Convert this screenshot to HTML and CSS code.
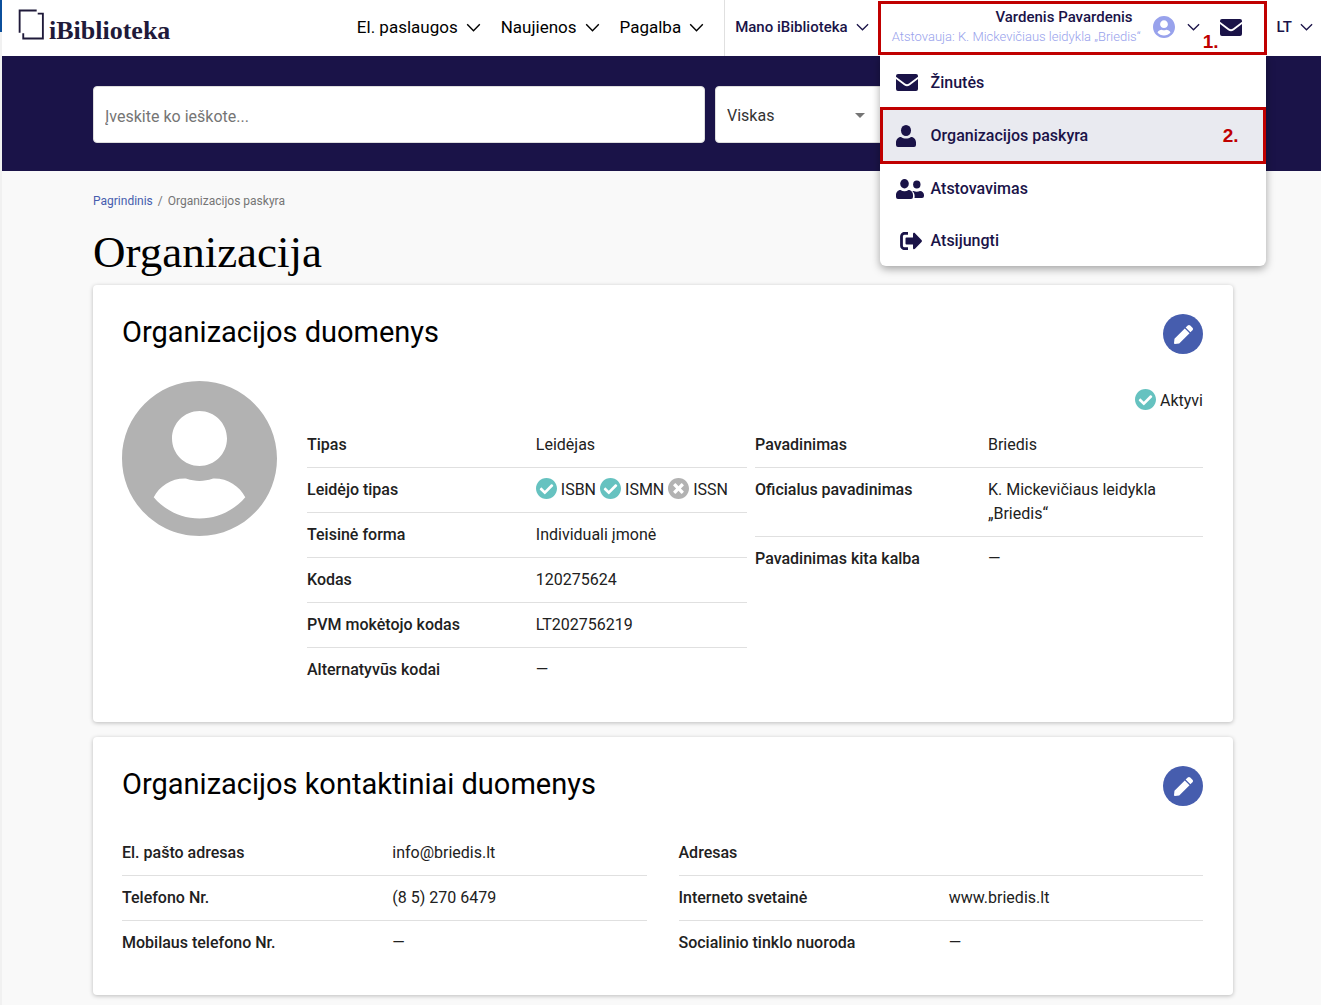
FILE: index.html
```html
<!DOCTYPE html>
<html lang="lt">
<head>
<meta charset="utf-8">
<meta name="viewport" content="width=device-width, initial-scale=1">
<title>Organizacija</title>
<link rel="stylesheet" href="styles.css">
</head>
<body>
<svg class="sprite" aria-hidden="true">
  <symbol id="chevron" viewBox="0 0 16 10"><path d="M1 1.5 8 8.5 15 1.5" fill="none" stroke="currentColor" stroke-width="1.6"/></symbol>
  <symbol id="envelope" viewBox="0 0 22 17"><path d="M2 0h18a2 2 0 0 1 2 2v.8l-9 6.7c-1.4 1-2.6 1-4 0L0 2.8V2a2 2 0 0 1 2-2z"/><path d="M0 5l8.2 6.2c1.9 1.4 3.700 1.400 5.600 0L22 5v10a2 2 0 0 1-2 2H2a2 2 0 0 1-2-2z"/></symbol>
  <symbol id="user" viewBox="0 0 20 22"><ellipse cx="10" cy="5.500" rx="5" ry="5.500"/><path d="M5 12c3 2 7 2 10 0 3 0 5 2.500 5 5.500V20a2 2 0 0 1-2 2H2a2 2 0 0 1-2-2v-2.500C0 14.500 2 12 5 12z"/></symbol>
  <symbol id="users" viewBox="0 0 28 20"><ellipse cx="8.500" cy="4.700" rx="4.300" ry="4.700"/><path d="M4.500 11c2.400 1.600 5.600 1.600 8 0 2.500 0 4.500 2.300 4.500 5v2a2 2 0 0 1-2 2H2a2 2 0 0 1-2-2v-2c0-2.700 2-5 4.500-5z"/><ellipse cx="20.800" cy="5.500" rx="3.700" ry="4"/><path d="M17.500 12c2 1 4.500 1 6.500 0 2.200 0 4 1.900 4 4v1a2 2 0 0 1-2 2h-7.500c.5-2.500 0-5-2.200-7z"/></symbol>
  <symbol id="logout" viewBox="0 0 22 18"><path d="M8 1.300H4.500A3 3 0 0 0 1.500 4.300v9.400a3 3 0 0 0 3 3H8" fill="none" stroke="currentColor" stroke-width="2.800"/><path d="M5.500 6.500a1 1 0 0 1 1-1H13V2c0-1.200 1.200-1.600 2-.8l6.500 6.900c.6.600.6 1.200 0 1.800L15 16.800c-.8.800-2 .4-2-.8v-3.500H6.500a1 1 0 0 1-1-1z"/></symbol>
  <symbol id="account" viewBox="0 8 496 496"><path d="M248 8C111 8 0 119 0 256s111 248 248 248 248-111 248-248S385 8 248 8zm0 96c48.600 0 88 39.400 88 88s-39.400 88-88 88-88-39.400-88-88 39.400-88 88-88zm0 344c-58.700 0-111.300-26.600-146.500-68.200 18.800-35.400 55.600-59.800 98.500-59.800 2.400 0 4.800.4 7.100 1.100 13 4.200 26.600 6.900 40.900 6.900 14.300 0 28-2.700 40.900-6.900 2.300-.7 4.700-1.100 7.100-1.100 42.900 0 79.700 24.400 98.500 59.800C359.300 421.400 306.700 448 248 448z"/></symbol>
  <symbol id="check" viewBox="8 8 496 496"><path d="M504 256c0 136.967-111.033 248-248 248S8 392.967 8 256 119.033 8 256 8s248 111.033 248 248zM227.314 387.314l184-184c6.248-6.248 6.248-16.379 0-22.627l-22.627-22.627c-6.248-6.249-16.379-6.249-22.628 0L216 308.118l-70.059-70.059c-6.248-6.248-16.379-6.248-22.628 0l-22.627 22.627c-6.248 6.248-6.248 16.379 0 22.627l104 104c6.249 6.249 16.379 6.249 22.628.001z"/></symbol>
  <symbol id="cross" viewBox="8 8 496 496"><path d="M256 8C119 8 8 119 8 256s111 248 248 248 248-111 248-248S393 8 256 8zm121.600 313.100c4.700 4.700 4.700 12.300 0 17L338 377.600c-4.700 4.700-12.300 4.700-17 0L256 312l-65.100 65.600c-4.700 4.700-12.300 4.700-17 0L134.400 338c-4.700-4.700-4.700-12.300 0-17l65.600-65-65.600-65.100c-4.700-4.700-4.700-12.300 0-17l39.600-39.600c4.700-4.700 12.300-4.700 17 0l65 65.700 65.100-65.600c4.700-4.700 12.300-4.700 17 0l39.600 39.600c4.700 4.700 4.700 12.300 0 17L312 256l65.600 65.100z"/></symbol>
  <symbol id="pen" viewBox="0 0 512 512"><path d="M290.740 93.240l128.020 128.020-277.990 277.990-114.140 12.600C11.350 513.540-1.560 500.620.14 485.340l12.700-114.220 277.900-277.880zm207.200-19.060l-60.110-60.110c-18.750-18.750-49.160-18.750-67.910 0l-56.550 56.550 128.020 128.020 56.550-56.550c18.750-18.760 18.750-49.160 0-67.910z"/></symbol>
</svg>

<header class="topbar">
  <a class="logo" href="#">
    <svg class="logo-mark" viewBox="0 0 25 30" aria-hidden="true"><path d="M1.500 23V1.500H18M19 4.500h5V28.500H5v-5" fill="none" stroke="currentColor" stroke-width="1.800"/></svg>
    <span>iBiblioteka</span>
  </a>
  <nav class="main-nav">
    <button class="nav-item" type="button">El. paslaugos <svg class="chevron"><use href="#chevron"/></svg></button>
    <button class="nav-item" type="button">Naujienos <svg class="chevron"><use href="#chevron"/></svg></button>
    <button class="nav-item" type="button">Pagalba <svg class="chevron"><use href="#chevron"/></svg></button>
  </nav>
  <button class="nav-item nav-item-small my-library" type="button">Mano iBiblioteka <svg class="chevron chevron-small"><use href="#chevron"/></svg></button>
  <div class="account">
    <button class="account-toggle" type="button" aria-expanded="true">
      <span class="account-text">
        <span class="account-name">Vardenis Pavardenis</span>
        <span class="account-org">Atstovauja: K. Mickevičiaus leidykla „Briedis“</span>
      </span>
      <svg class="account-icon"><use href="#account"/></svg>
      <svg class="chevron chevron-small"><use href="#chevron"/></svg>
    </button>
    <a class="mail-link" href="#" aria-label="Žinutės"><svg class="icon-envelope"><use href="#envelope"/></svg></a>
    <span class="step step-one">1.</span>
    <nav class="account-menu">
      <a class="menu-item" href="#"><span class="menu-icon"><svg class="icon-envelope"><use href="#envelope"/></svg></span>Žinutės</a>
      <a class="menu-item menu-item-active" href="#"><span class="menu-icon"><svg class="icon-user"><use href="#user"/></svg></span>Organizacijos paskyra<span class="step step-two">2.</span></a>
      <a class="menu-item" href="#"><span class="menu-icon"><svg class="icon-users"><use href="#users"/></svg></span>Atstovavimas</a>
      <a class="menu-item" href="#"><span class="menu-icon menu-icon-logout"><svg class="icon-logout"><use href="#logout"/></svg></span>Atsijungti</a>
    </nav>
  </div>
  <button class="nav-item nav-item-small language" type="button">LT <svg class="chevron chevron-small"><use href="#chevron"/></svg></button>
</header>

<form class="search">
  <div class="search-fields">
    <input class="search-input" type="text" placeholder="Įveskite ko ieškote..." aria-label="Įveskite ko ieškote...">
    <div class="search-scope">
      <select class="scope-select" aria-label="Viskas"><option>Viskas</option></select>
    </div>
  </div>
</form>

<main class="content">
  <nav class="breadcrumb"><a href="#">Pagrindinis</a><span>/</span><span>Organizacijos paskyra</span></nav>
  <h1 class="page-title">Organizacija</h1>

  <section class="card">
    <div class="card-head">
      <h2 class="card-title">Organizacijos duomenys</h2>
      <button class="edit" type="button" aria-label="Redaguoti"><svg class="icon-pen"><use href="#pen"/></svg></button>
    </div>
    <div class="profile">
      <svg class="avatar"><use href="#account"/></svg>
      <div class="profile-data">
        <div class="status"><svg class="badge"><use href="#check"/></svg>Aktyvi</div>
        <div class="profile-columns">
          <dl class="facts">
            <div class="fact"><dt>Tipas</dt><dd>Leidėjas</dd></div>
            <div class="fact"><dt>Leidėjo tipas</dt><dd class="kinds">
              <span class="kind"><svg class="badge"><use href="#check"/></svg>ISBN</span>
              <span class="kind"><svg class="badge"><use href="#check"/></svg>ISMN</span>
              <span class="kind"><svg class="badge badge-off"><use href="#cross"/></svg>ISSN</span></dd></div>
            <div class="fact"><dt>Teisinė forma</dt><dd>Individuali įmonė</dd></div>
            <div class="fact"><dt>Kodas</dt><dd>120275624</dd></div>
            <div class="fact"><dt>PVM mokėtojo kodas</dt><dd>LT202756219</dd></div>
            <div class="fact"><dt>Alternatyvūs kodai</dt><dd>—</dd></div>
          </dl>
          <dl class="facts">
            <div class="fact"><dt>Pavadinimas</dt><dd>Briedis</dd></div>
            <div class="fact"><dt>Oficialus pavadinimas</dt><dd>K. Mickevičiaus leidykla „Briedis“</dd></div>
            <div class="fact"><dt>Pavadinimas kita kalba</dt><dd>—</dd></div>
          </dl>
        </div>
      </div>
    </div>
  </section>

  <section class="card">
    <div class="card-head">
      <h2 class="card-title">Organizacijos kontaktiniai duomenys</h2>
      <button class="edit" type="button" aria-label="Redaguoti"><svg class="icon-pen"><use href="#pen"/></svg></button>
    </div>
    <div class="contacts">
      <dl class="facts">
        <div class="fact"><dt>El. pašto adresas</dt><dd>info@briedis.lt</dd></div>
        <div class="fact"><dt>Telefono Nr.</dt><dd>(8 5) 270 6479</dd></div>
        <div class="fact"><dt>Mobilaus telefono Nr.</dt><dd>—</dd></div>
      </dl>
      <dl class="facts">
        <div class="fact"><dt>Adresas</dt><dd></dd></div>
        <div class="fact"><dt>Interneto svetainė</dt><dd>www.briedis.lt</dd></div>
        <div class="fact"><dt>Socialinio tinklo nuoroda</dt><dd>—</dd></div>
      </dl>
    </div>
  </section>
</main>
</body>
</html>
```
FILE: styles.css
```css
:root {
  --navy: #1a1348;
  --red: #c00000;
  --lilac: #98a2ec;
}

* { box-sizing: border-box; }

body {
  margin: 0;
  border-left: 2px solid #f1f1f1;
  background: #f9f9f9;
  color: #212121;
  font: 16px/24px Roboto, sans-serif;
}

/* coloured tip of the window edge */
body::before {
  content: "";
  position: absolute;
  left: 0;
  top: 0;
  width: 2px;
  height: 32px;
  background: #0b4f9c;
}

button {
  padding: 0;
  border: 0;
  background: none;
  color: inherit;
  font: inherit;
  cursor: pointer;
}

a { color: inherit; text-decoration: none; }
svg { fill: currentColor; flex: none; }
.sprite { position: absolute; width: 0; height: 0; }

/* top bar */
.topbar {
  display: flex;
  align-items: stretch;
  height: 56px;
  padding: 0 8px 0 16px;
  background: #fff;
  color: var(--navy);
}

.logo {
  display: flex;
  gap: 5px;
  margin-right: auto;
  padding-top: 9px;
  color: #1f1a3a;
  font: bold 26px/44px "Liberation Serif", serif;
}
.logo-mark { width: 26px; height: 31px; }

.main-nav {
  display: flex;
  gap: 20px;
  padding-right: 20px;
  border-right: 1px solid #e0e0e0;
  color: #000;
}
.nav-item {
  display: flex;
  align-items: center;
  gap: 8px;
  padding-bottom: 2px;
  font-size: 17px;
  white-space: nowrap;
}
.nav-item-small { font-size: 15px; font-weight: 500; }
.my-library { padding-left: 10px; padding-right: 9px; }
.language { padding-left: 10px; }
.chevron { width: 15px; height: 9px; }
.chevron-small { width: 13px; height: 8px; }

.account {
  position: relative;
  display: flex;
  align-items: center;
  width: 389px;
  margin: 1px 0;
  padding: 0 22px 2px 9px;
  border: 3px solid var(--red);
}
.account-toggle {
  display: flex;
  flex: 1;
  align-items: center;
  gap: 12px;
}
.account-text {
  display: flex;
  flex: 1;
  flex-direction: column;
  text-align: right;
  line-height: 20px;
}
.account-name { padding-right: 8px; font-size: 15px; font-weight: 500; }
.account-org { color: var(--lilac); font-size: 13px; font-weight: 300; white-space: nowrap; }
.account-icon { width: 22px; height: 22px; color: var(--lilac); }
.mail-link { display: flex; margin-left: 20px; }
.icon-envelope { width: 22px; height: 17px; }

/* step markers */
.step {
  color: var(--red);
  font: bold 19px/22px "Liberation Sans", sans-serif;
}
.step-one { position: absolute; right: 45px; bottom: -1px; }
.step-two { margin-left: auto; }

.account-menu {
  position: absolute;
  z-index: 1;
  top: 51px;
  left: -1px;
  right: -2px;
  padding-top: 1px;
  border-radius: 0 0 6px 6px;
  background: #fff;
  box-shadow: 0 3px 8px rgba(0, 0, 0, .35);
  clip-path: inset(0 -20px -20px);
}
.menu-item {
  position: relative;
  display: flex;
  align-items: center;
  height: 53px;
  padding: 0 27px 0 16px;
  font-weight: 500;
}
.menu-item:last-child { height: 51px; }
.menu-icon { display: flex; width: 35px; }
.menu-icon-logout { padding-left: 4px; }
.menu-item-active { background: #e9eaf0; }
.menu-item-active::after {
  content: "";
  position: absolute;
  inset: -2px 0;
  border: 3px solid var(--red);
}
.icon-user { width: 20px; height: 22px; }
.icon-users { width: 28px; height: 20px; }
.icon-logout { width: 22px; height: 18px; }

/* search */
.search { padding: 30px 88px 28px 91px; background: var(--navy); }
.search-fields {
  display: grid;
  grid-template-columns: 612fr 176fr 332fr;
  gap: 10px;
}
.search-input,
.scope-select {
  width: 100%;
  height: 57px;
  padding: 3px 11px 0;
  border: 1px solid #ddd;
  border-radius: 4px;
  background: #fff;
  color: #333;
  font: 16px/24px Roboto, sans-serif;
}
.search-input::placeholder { color: #757575; }
.scope-select { appearance: none; }
.search-scope { position: relative; }
.search-scope::after {
  content: "";
  position: absolute;
  top: 27px;
  right: 26px;
  border: 5px solid transparent;
  border-top-color: #757575;
  border-bottom: 0;
}

/* page */
.content { padding: 21px 88px 10px 91px; }
.breadcrumb {
  display: flex;
  gap: 5px;
  color: #757575;
  font-size: 12px;
  line-height: 18px;
}
.breadcrumb a { color: #465dae; }
.page-title {
  margin: 17px 0 8px;
  color: #000;
  font: 45px/50px "Liberation Serif", serif;
}

.card {
  margin-bottom: 15px;
  padding: 29px 30px 30px 29px;
  border-radius: 4px;
  background: #fff;
  box-shadow: 0 1px 4px rgba(0, 0, 0, .25);
}
.card:last-child { margin-bottom: 0; }
.card-head {
  display: flex;
  justify-content: space-between;
  margin-bottom: 25px;
}
.card-title {
  margin: 0;
  color: #000;
  font-size: 29px;
  font-weight: 400;
  line-height: 36px;
}
.edit {
  display: flex;
  align-items: center;
  justify-content: center;
  width: 40px;
  height: 40px;
  border-radius: 50%;
  background: #465dae;
  color: #fff;
}
.icon-pen { width: 19px; height: 19px; }

.profile { display: flex; align-items: flex-start; gap: 30px; }
.avatar { width: 155px; height: 155px; margin-top: 2px; color: #b2b2b2; }
.profile-data { flex: 1; }
.status {
  display: flex;
  align-items: center;
  justify-content: flex-end;
  gap: 4px;
  height: 44px;
}
.badge { width: 21px; height: 21px; margin-bottom: 3px; color: #66c2c0; }
.badge-off { color: #b2b2b2; }
.profile-columns { display: grid; grid-template-columns: 440fr 448fr; gap: 8px; }
.contacts { display: grid; grid-template-columns: 1fr 1fr; gap: 32px; }

.facts { margin: 0; }
.fact {
  display: grid;
  grid-template-columns: 52fr 48fr;
  padding: 10px 0;
  border-bottom: 1px solid #e0e0e0;
}
.contacts .fact { grid-template-columns: 270fr 254fr; }
.fact:last-child { border-bottom: 0; }
.fact dt { font-weight: 500; }
.fact dd { margin: 0; }
.kinds { display: flex; gap: 4px; }
.kind { display: flex; align-items: center; gap: 4px; }
```
